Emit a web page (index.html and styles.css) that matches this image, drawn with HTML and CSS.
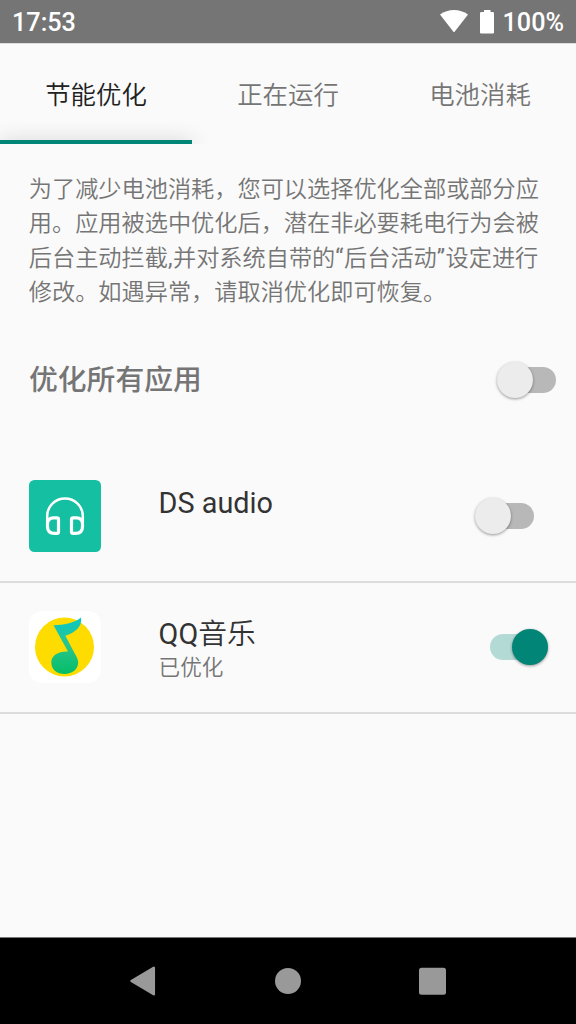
FILE: index.html
```html
<!DOCTYPE html>
<html lang="zh-CN">
<head>
<meta charset="utf-8">
<title>节能优化</title>
<link rel="stylesheet" href="styles.css">
</head>
<body>
<header class="status">
  <span class="clock">17:53</span>
  <svg class="wifi" width="28" height="23" viewBox="0 0 28 23"><path d="M0 4.5C8-1.5 20-1.5 28 4.5L14.8 21.5Q14 22.5 13.2 21.5Z" fill="#fff"/></svg>
  <svg class="battery" width="14" height="24" viewBox="0 0 14 24" fill="#fff"><rect x="4" y="0" width="6.500" height="4"/><rect x="0" y="2" width="14" height="21.500" rx="1.300"/></svg>
  <span class="percent">100%</span>
</header>
<nav class="tabs">
  <div class="tab active">节能优化</div>
  <div class="tab">正在运行</div>
  <div class="tab">电池消耗</div>
</nav>
<main class="content">
  <p class="intro">为了减少电池消耗，您可以选择优化全部或部分应<br>用。应用被选中优化后，潜在非必要耗电行为会被<br>后台主动拦截<span class="latin">,</span>并对系统自带的<span class="latin">“</span>后台活动<span class="latin">”</span>设定进行<br>修改。如遇异常，请取消优化即可恢复。</p>
  <section class="all">
    <h1 class="all-title">优化所有应用</h1>
    <span class="switch"></span>
  </section>
  <section class="app">
    <svg class="icon" width="72" height="72" viewBox="0 0 72 72">
      <rect width="72" height="72" rx="5.500" fill="#14bfa2"/>
      <g fill="none" stroke="#fff" stroke-linejoin="round">
        <path d="M18.200 43V36a17.800 17.500 0 0 1 35.600 0V43" stroke-width="2.500"/>
        <path d="M18.500 44q0-6.200 6-6.200h3.300q1.700 0 1.700 1.700v12.200q0 1.700-1.700 1.700h-2.300q-7 0-7-7z" stroke-width="3.200"/>
        <path d="M53.500 44q0-6.200-6-6.200h-3.300q-1.700 0-1.700 1.700v12.200q0 1.700 1.700 1.700h2.300q7 0 7-7z" stroke-width="3.200"/>
      </g>
    </svg>
    <div class="label"><div class="name">DS audio</div></div>
    <span class="switch inset"></span>
  </section>
  <section class="app second">
    <svg class="icon" width="72" height="72" viewBox="0 0 72 72">
      <defs><linearGradient id="note" x1="0" y1="0" x2="0" y2="1"><stop offset="0" stop-color="#0bc8c8"/><stop offset=".5" stop-color="#28c58c"/><stop offset="1" stop-color="#05bd67"/></linearGradient></defs>
      <rect width="72" height="72" rx="13" fill="#fff"/>
      <circle cx="35.500" cy="36" r="29.500" fill="#ffdc00"/>
      <path d="M52 6.500C44 13 35 13.500 24.500 14.300L39 40.500C30 40 22.300 44 22.300 51.500C22.300 58.500 28 63 35.500 63C43.500 63 49.200 58 49.200 51.500C49.200 48.500 47.500 45.500 46 43L36.300 24.800C46 21.500 53.500 16 52 6.500Z" fill="url(#note)"/>
    </svg>
    <div class="label"><div class="name">QQ<span class="cjk">音乐</span></div><div class="note">已优化</div></div>
    <span class="switch on"></span>
  </section>
</main>
<footer class="navbar">
  <svg width="192" height="86" viewBox="0 0 192 86"><path d="M131.500 43L153.800 29.800V56.200Z" fill="#999" stroke="#999" stroke-width="2.500" stroke-linejoin="round"/></svg>
  <svg width="192" height="86" viewBox="0 0 192 86"><circle cx="96" cy="43" r="13" fill="#999"/></svg>
  <svg width="192" height="86" viewBox="0 0 192 86"><rect x="35" y="29.700" width="27" height="27" rx="2.500" fill="#999"/></svg>
</footer>
</body>
</html>
```
FILE: styles.css
```css
* { box-sizing: border-box; }
body {
  margin: 0;
  width: 576px;
  height: 1024px;
  overflow: hidden;
  display: flex;
  flex-direction: column;
  background: #fafafa;
  color: #757575;
  font-family: Roboto, "Noto Sans CJK SC", sans-serif;
}
.status {
  height: 43px;
  flex: none;
  display: flex;
  align-items: center;
  padding: 0 12px;
  background: #757575;
  box-shadow: 0 1px 0 #dedede;
  color: #fff;
  font-size: 25.2px;
  font-weight: 500;
  line-height: 43px;
}
.clock { flex: 1; padding-top: 2px; }
.wifi { margin-right: 12px; }
.battery { margin-right: 9px; }
.percent { padding-top: 2px; }
.tabs {
  height: 101px;
  flex: none;
  display: grid;
  grid-template-columns: repeat(3, 192px);
  overflow: hidden;
}
.tab {
  padding-top: 33px;
  font-size: 25.4px;
  font-weight: 350;
  line-height: 38px;
  text-align: center;
}
.active { color: #212121; display: flex; flex-direction: column; justify-content: space-between; }
.active::after {
  content: "";
  height: 4px;
  background: #008577;
  box-shadow: 0 4px 20px rgba(0, 0, 0, .45);
}
.content { flex: 1; }
.intro {
  margin: 0;
  padding: 28px 0 0 28.8px;
  font-size: 23.2px;
  font-weight: 350;
  line-height: 34.4px;
  white-space: nowrap;
}
.latin { font-weight: 400; letter-spacing: .5px; }
.all {
  height: 142px;
  display: flex;
  align-items: center;
  justify-content: space-between;
  padding: 0 20px 2px 29px;
}
.all-title { margin: 0; padding-top: 1px; font-size: 28.8px; font-weight: 500; line-height: 42px; }
.switch {
  position: relative;
  width: 58px;
  height: 26px;
  border-radius: 13px;
  background: #b8b8b8;
}
.switch::before {
  content: "";
  position: absolute;
  left: -1px;
  top: -5px;
  width: 36px;
  height: 36px;
  border-radius: 50%;
  background: #ececec;
  box-shadow: 0 1px 3px rgba(0, 0, 0, .4);
}
.on { background: #b4dad6; }
.on::before { left: 22px; background: #008577; }
.inset { margin-right: 14px; }
.app {
  height: 131px;
  display: flex;
  align-items: center;
  padding: 0 28px 0 29px;
  border-bottom: 2px solid #dcdcdc;
}
.icon { flex: none; }
.label { flex: 1; align-self: stretch; padding: 32px 0 0 57.600px; }
.name { color: #333; font-size: 28.8px; line-height: 38px; }
.cjk { font-weight: 350; }
.note { padding-top: 1px; font-size: 21.6px; font-weight: 350; line-height: 28px; }
.navbar {
  height: 87px;
  flex: none;
  display: flex;
  background: #000;
  border-top: 1px solid #777;
}
```
